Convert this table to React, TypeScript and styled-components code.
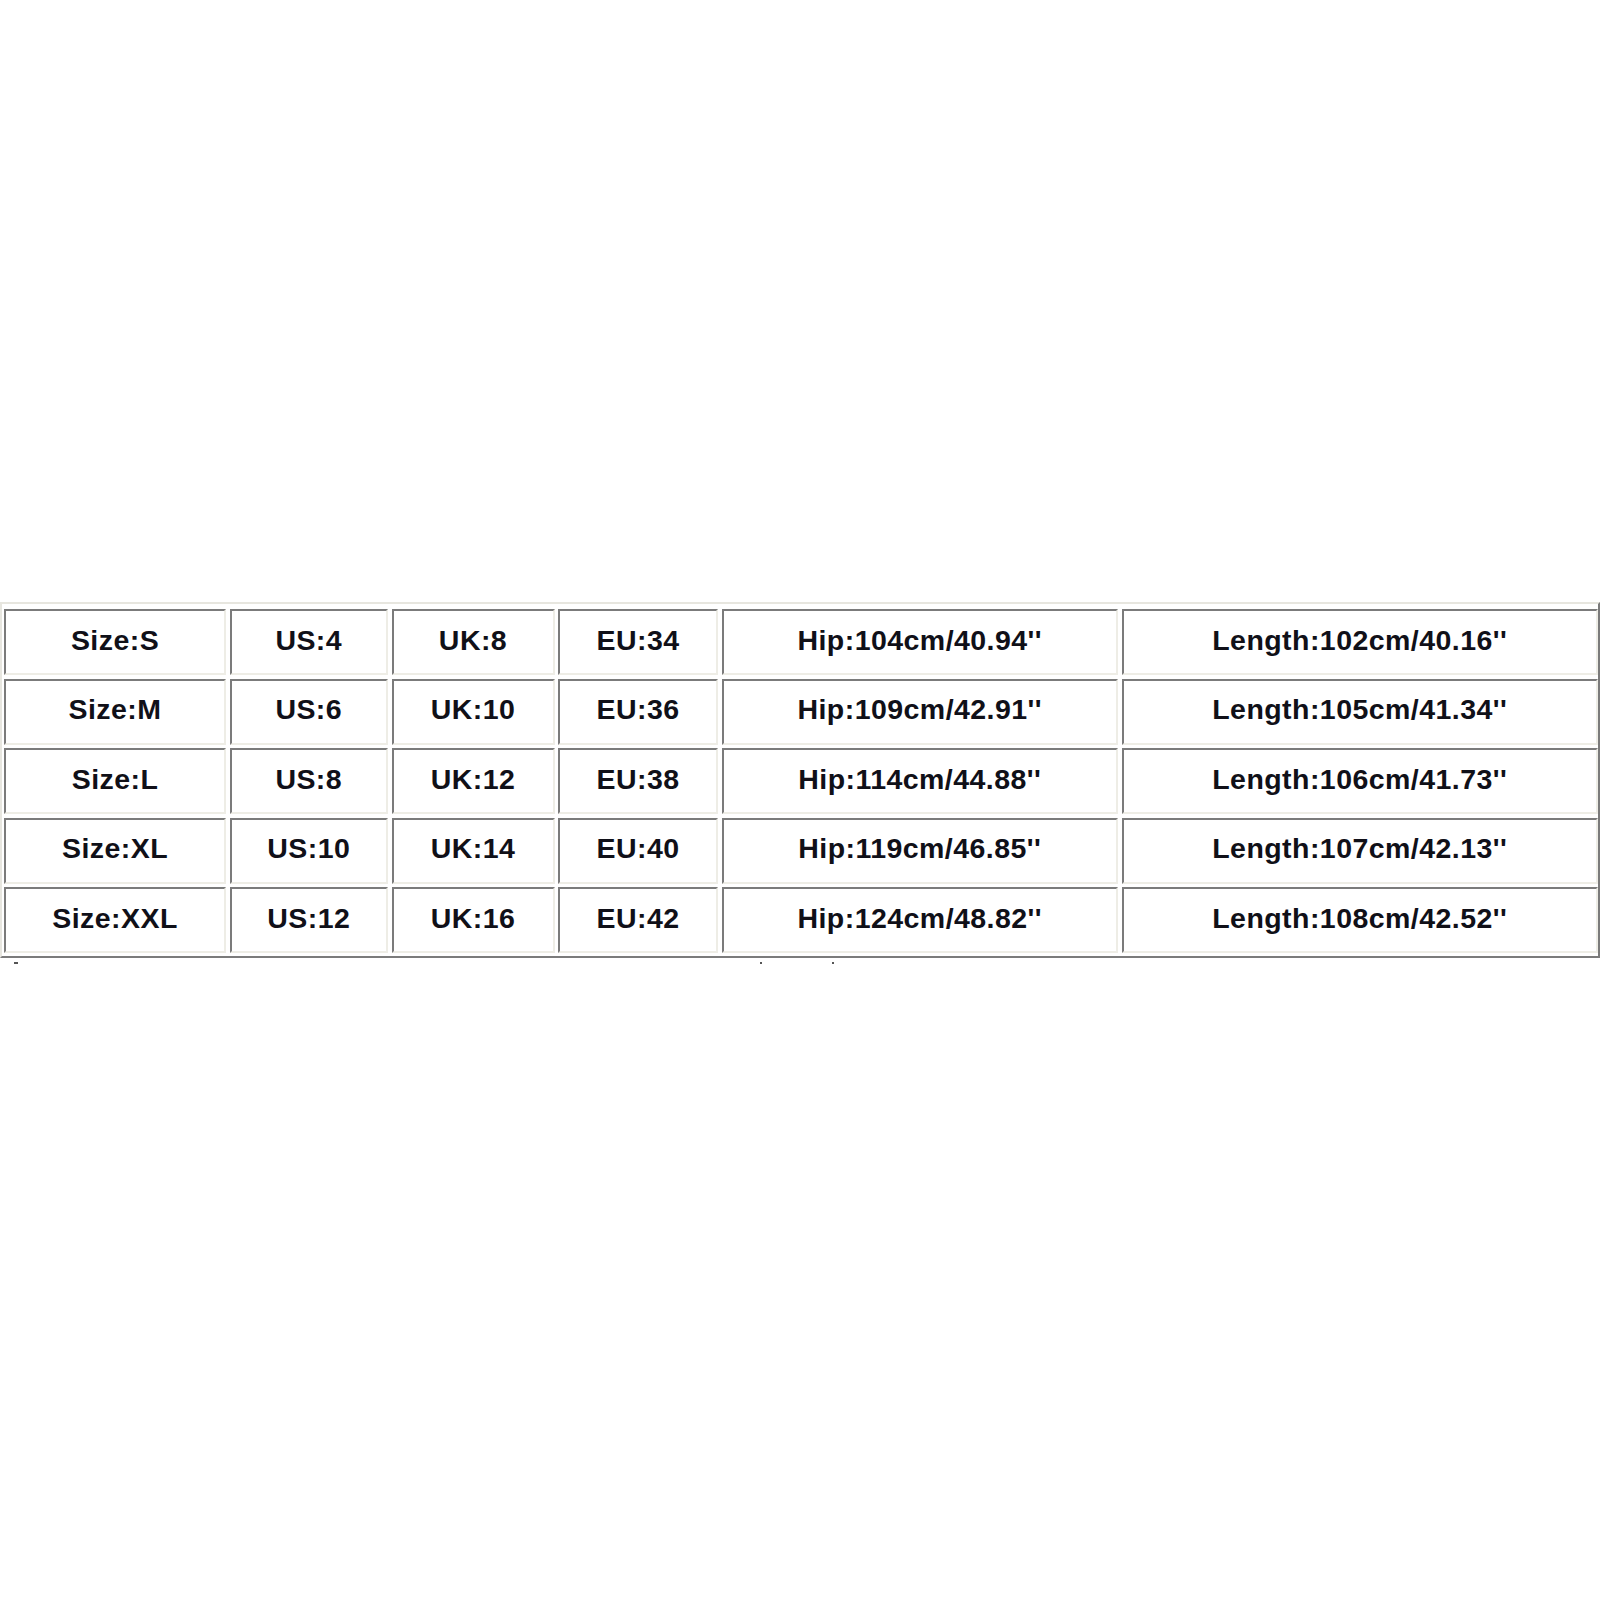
import React from "react";
import styled, { createGlobalStyle } from "styled-components";

const GlobalStyle = createGlobalStyle`
  html, body { margin: 0; padding: 0; background: #ffffff; }
  body { font-family: "Liberation Sans", Arial, sans-serif; }
`;

const Page = styled.div`
  width: 1600px;
  height: 1600px;
  box-sizing: border-box;
  padding-top: 602px;
  background: #ffffff;
  position: relative;
`;

const Table = styled.div`
  box-sizing: border-box;
  width: 1600px;
  border-style: solid;
  border-width: 2px;
  border-color: #e7e6df #7b7b7b #7b7b7b #e7e6df;
  padding: 5px 0.5px 3px 2px;
  display: grid;
  grid-template-columns: 222px 158.5px 163px 160px 396.5px 476.5px;
  grid-auto-rows: 66px;
  column-gap: 3.5px;
  row-gap: 3.5px;
`;

const Cell = styled.div`
  box-sizing: border-box;
  border-style: solid;
  border-width: 2px;
  border-color: #7b7b7b #eeede6 #eeede6 #7b7b7b;
  display: flex;
  align-items: center;
  justify-content: center;
  padding-bottom: 4px;
  font-family: "Liberation Sans", Arial, sans-serif;
  font-weight: 700;
  font-size: 28.5px;
  letter-spacing: 0.45px;
  color: #101018;
  white-space: nowrap;
`;

const Speck = styled.span<{ $x: number; $y: number; $w: number }>`
  position: absolute;
  left: ${(p) => p.$x}px;
  top: ${(p) => p.$y}px;
  width: ${(p) => p.$w}px;
  height: 2px;
  background: #555;
`;

const rows = [
  ["Size:S", "US:4", "UK:8", "EU:34", "Hip:104cm/40.94''", "Length:102cm/40.16''"],
  ["Size:M", "US:6", "UK:10", "EU:36", "Hip:109cm/42.91''", "Length:105cm/41.34''"],
  ["Size:L", "US:8", "UK:12", "EU:38", "Hip:114cm/44.88''", "Length:106cm/41.73''"],
  ["Size:XL", "US:10", "UK:14", "EU:40", "Hip:119cm/46.85''", "Length:107cm/42.13''"],
  ["Size:XXL", "US:12", "UK:16", "EU:42", "Hip:124cm/48.82''", "Length:108cm/42.52''"],
];

export default function App() {
  return (
    <>
      <GlobalStyle />
      <Page>
        <Table>
          {rows.map((r, i) =>
            r.map((c, j) => <Cell key={`${i}-${j}`}>{c}</Cell>)
          )}
        </Table>
        <Speck $x={14} $y={962} $w={4} />
        <Speck $x={760} $y={962} $w={2} />
        <Speck $x={832} $y={962} $w={2} />
      </Page>
    </>
  );
}
